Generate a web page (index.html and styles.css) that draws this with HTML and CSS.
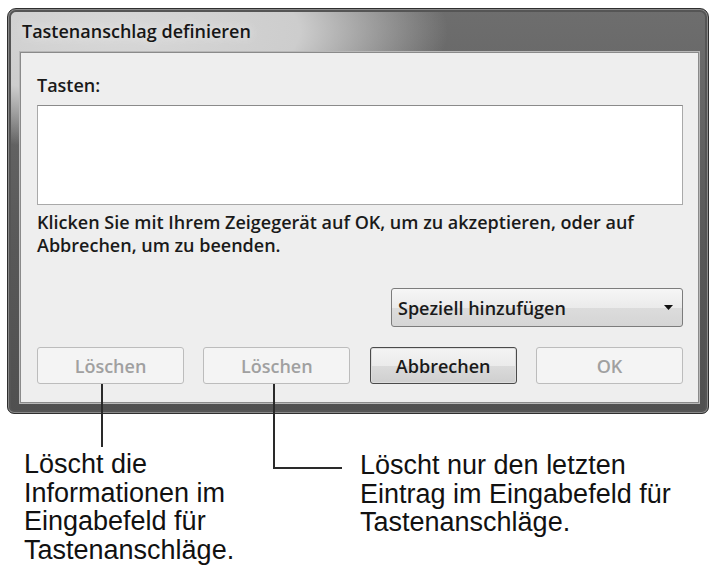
FILE: index.html
```html
<!DOCTYPE html>
<html lang="de">
<head>
    <meta charset="UTF-8">
    <title>Tastenanschlag definieren</title>
    <link rel="stylesheet" href="styles.css">
</head>
<body>
    <div class="figure">
        <div class="window">
            <div class="titlebar">Tastenanschlag definieren</div>
            <div class="panel">
                <div class="label">Tasten:</div>
                <div class="keys-box"></div>
                <p class="hint">Klicken Sie mit Ihrem Zeigegerät auf OK, um zu akzeptieren, oder auf<br>Abbrechen, um zu beenden.</p>
                <div class="special-row">
                    <div class="select">
                        <span>Speziell hinzufügen</span>
                        <svg width="9" height="5" viewBox="0 0 9 5"><path d="M0 0H9L4.5 5Z" fill="#111"/></svg>
                    </div>
                </div>
                <div class="buttons">
                    <button class="btn" disabled>Löschen</button>
                    <button class="btn" disabled>Löschen</button>
                    <button class="btn btn-default">Abbrechen</button>
                    <button class="btn" disabled>OK</button>
                </div>
            </div>
        </div>

        <div class="callouts">
            <p class="note note-left">Löscht die<br>Informationen im<br>Eingabefeld für<br>Tastenanschläge.</p>
            <p class="note note-right">Löscht nur den letzten<br>Eintrag im Eingabefeld für<br>Tastenanschläge.</p>
        </div>

        <!-- leader lines from the buttons to the notes -->
        <div class="leader leader-one"></div>
        <div class="leader leader-two"></div>
        <div class="leader leader-two-h"></div>
    </div>
</body>
</html>
```

FILE: styles.css
```css
body {
    margin: 0;
    background-color: #fff;
    font-family: "Open Sans", "Noto Sans", sans-serif;
}
.figure {
    position: relative;
    width: 712px;
    height: 567px;
    padding: 8px 0 0 7px;
    box-sizing: border-box;
}
.window {
    width: 702px;
    height: 406px;
    box-sizing: border-box;
    display: flex;
    flex-direction: column;
    padding: 0 9px 10px 12px;
    border: 1px solid #2f2f2f;
    border-radius: 9px 9px 7px 7px;
    background:
        radial-gradient(ellipse 330px 120px at 110px 22px, #d8d8d8 0%, #cdcdcd 55%, rgba(110, 110, 110, 0) 100%),
        linear-gradient(#6e6e6e, #585858 60%, #505050);
    box-shadow: inset 0 0 0 1px #8a8a8a, inset 0 0 0 3px #555;
}
.titlebar {
    height: 43px;
    padding: 10px 0 0 2px;
    box-sizing: border-box;
    font-size: 18px;
    font-weight: 600;
    line-height: 24px;
    color: #161616;
    text-shadow: 0 0 8px #ececec;
}
.panel {
    flex: 1;
    display: flex;
    flex-direction: column;
    padding: 20px 15px 0 16px;
    background-color: #eeeeee;
    border: 1px solid #8a8a8a;
    box-shadow: 0 0 0 1px #b8b8b8;
    color: #1a1a1a;
    font-size: 18px;
    font-weight: 600;
}
.label {
    line-height: 24px;
}
.keys-box {
    height: 100px;
    margin-top: 8px;
    box-sizing: border-box;
    background-color: #fff;
    border: 1px solid #a9a9a9;
    border-top-color: #8a8a8a;
}
.hint {
    margin: 6px 0 0;
    line-height: 23px;
}
.special-row {
    display: flex;
    justify-content: flex-end;
    margin-top: 31px;
}
.select {
    width: 292px;
    height: 39px;
    box-sizing: border-box;
    display: flex;
    align-items: center;
    justify-content: space-between;
    padding: 0 9px 0 6px;
    border: 1px solid #7c7c7c;
    border-radius: 3px;
    background: linear-gradient(#f6f6f6, #ebebeb 50%, #dcdcdc 51%, #d5d5d5);
}
.buttons {
    display: flex;
    justify-content: space-between;
    margin-top: 20px;
}
.btn {
    width: 147px;
    height: 37px;
    padding: 0;
    font-family: inherit;
    font-size: 18px;
    font-weight: 600;
    color: #1a1a1a;
    border-radius: 3px;
    border: 1px solid #707070;
    background: linear-gradient(#f4f4f4, #ebebeb 50%, #dbdbdb 51%, #cfcfcf);
}
.btn:disabled {
    color: #a0a0a0;
    border-color: #bcbcbc;
    background: #f4f4f4;
}
.btn-default {
    border-color: #4a4a4a;
    box-shadow: inset 0 0 0 1px #dcdcdc;
}
.callouts {
    display: flex;
    margin-top: 36px;
}
.note {
    margin: 0;
    font-family: "Liberation Sans", Arial, sans-serif;
    font-size: 27px;
    line-height: 28.5px;
    color: #111;
}
.note-left {
    width: 336px;
    padding-left: 17px;
}
.note-right {
    padding-top: 1px;
}
.leader {
    position: absolute;
    background-color: #2a2a2a;
}
.leader-one {
    left: 101px;
    top: 384px;
    width: 2px;
    height: 63px;
}
.leader-two {
    left: 273px;
    top: 384px;
    width: 2px;
    height: 85px;
}
.leader-two-h {
    left: 273px;
    top: 467px;
    width: 69px;
    height: 2px;
}
```
